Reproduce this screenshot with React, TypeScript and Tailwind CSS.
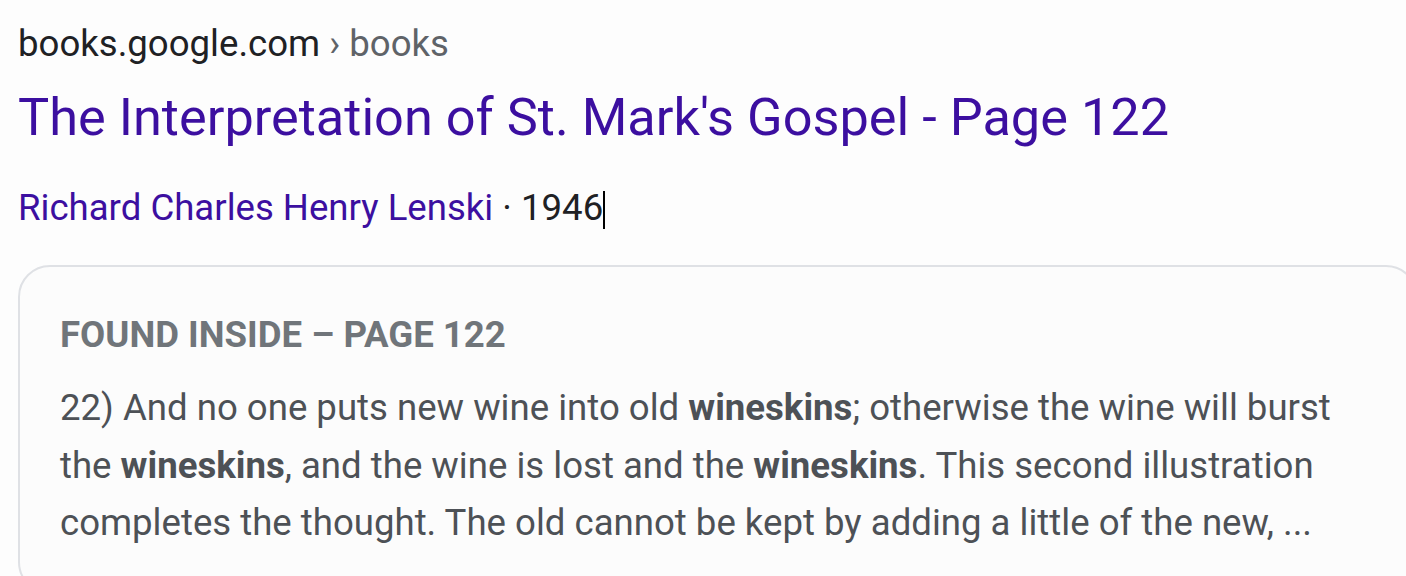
const App = () => {
	return (
		<div className="w-[1406px] h-[576px] overflow-hidden bg-[#fdfdfd] font-['Roboto',sans-serif]">
			<div className="pl-[18px] pt-[18px]">
				<div className="text-[36.6px] leading-[52px] text-[#202124]">
					books.google.com <span className="text-[#5f6368]">› books</span>
				</div>
				<h3 className="mt-[13px] text-[52.3px] leading-[68px] text-[#3c0fa0]">
					The Interpretation of St. Mark's Gospel - Page 122
				</h3>
				<div className="mt-[31px] text-[36.6px] leading-[52px] text-[#3c0fa0]">
					Richard Charles Henry Lenski <span className="text-[#202124]">· 1946</span>
					<span className="inline-block w-[1.5px] h-[38px] bg-black align-middle"></span>
				</div>
				<div className="mt-[31px] w-[1400px] rounded-[32px] border-2 border-[#dfe1e5] bg-[#fcfcfc] px-[40px] pt-[42px] pb-[40px]">
					<div className="text-[36.6px] leading-[52px] font-bold text-[#70757a]">FOUND INSIDE – PAGE 122</div>
					<p className="mt-[18px] text-[36.6px] leading-[57.5px] text-[#4d5156]">
						22) And no one puts new wine into old <b>wineskins</b>; otherwise the wine will burst
						<br />
						the <b>wineskins</b>, and the wine is lost and the <b>wineskins</b>. This second illustration
						<br />
						completes the thought. The old cannot be kept by adding a little of the new, ...
					</p>
				</div>
			</div>
		</div>
	);
};

export default App;
